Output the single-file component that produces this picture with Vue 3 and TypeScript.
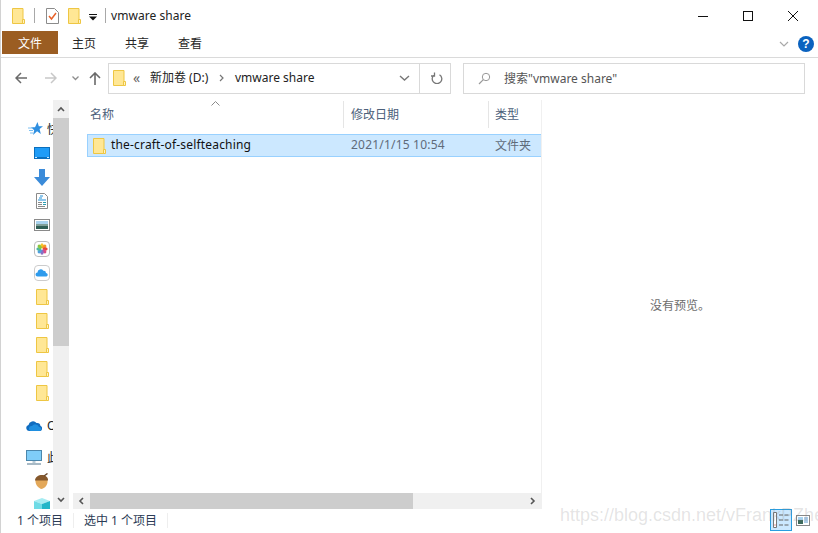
<script setup lang="ts">
const navRows: string[] = ['star', 'desk', 'down', 'doc', 'pic', 'photos', 'icloud', 'folder', 'folder', 'folder', 'folder', 'folder']
const tabs = ['主页', '共享', '查看']
const petals = [
  { r: 0, c: '#f6c528' },
  { r: 45, c: '#f59a23' },
  { r: 90, c: '#e8483c' },
  { r: 135, c: '#d94d8a' },
  { r: 180, c: '#8a6fc4' },
  { r: 225, c: '#4f9fdc' },
  { r: 270, c: '#4fb7a0' },
  { r: 315, c: '#8cc63f' },
]
</script>

<template>
  <div class="win">
    <svg class="defs" width="0" height="0" aria-hidden="true">
      <symbol id="fold" viewBox="0 0 13 16">
        <path d="M.5.5h10.500v15H.5z" fill="#ffe795" stroke="#eec643" />
        <path d="M10.500 11.500h2v4h-2z" fill="#fff3c4" stroke="#eec643" />
      </symbol>
    </svg>

    <header class="title">
      <svg class="ic12" width="13" height="16"><use href="#fold" /></svg>
      <i class="vsep s1"></i>
      <svg class="qdoc" width="13" height="16" viewBox="0 0 13 16">
        <path d="M.5.5h8l4 4v11H.5z" fill="#fff" stroke="#8b8b8b" />
        <path d="M3 8l2.500 3L10 5" fill="none" stroke="#e8622a" stroke-width="1.500" />
      </svg>
      <svg class="qfold" width="13" height="16"><use href="#fold" /></svg>
      <svg class="qdrop" width="8" height="7" viewBox="0 0 8 7">
        <path d="M0 0h8v1H0zM0 2.500h8L4 6.500z" fill="#111" />
      </svg>
      <i class="vsep s2"></i>
      <span class="wtitle">vmware share</span>
      <div class="caps">
        <svg width="12" height="12" viewBox="0 0 12 12"><path d="M1 6.500h10" stroke="#111" fill="none" /></svg>
        <svg width="12" height="12" viewBox="0 0 12 12"><rect x="1.500" y="1.500" width="9" height="9" fill="none" stroke="#111" /></svg>
        <svg width="12" height="12" viewBox="0 0 12 12"><path d="M1 1l10 10M11 1L1 11" stroke="#111" fill="none" /></svg>
      </div>
    </header>

    <nav class="ribbon">
      <span class="file">文件</span>
      <span v-for="t in tabs" :key="t" class="tab">{{ t }}</span>
      <svg class="rchev" width="10" height="6" viewBox="0 0 10 6"><path d="M1 1l4 4 4-4" fill="none" stroke="#a9a9a9" stroke-width="1.200" /></svg>
      <span class="help">?</span>
    </nav>

    <section class="addr">
      <svg class="a-back" width="12" height="12" viewBox="0 0 12 12"><path d="M6 1L1 6l5 5M1 6h11" fill="none" stroke="#6a6a6a" stroke-width="1.500" /></svg>
      <svg class="a-fwd" width="12" height="12" viewBox="0 0 12 12"><path d="M6 1l5 5-5 5M11 6H0" fill="none" stroke="#c8c8c8" stroke-width="1.500" /></svg>
      <svg class="a-drop" width="7" height="5" viewBox="0 0 7 5"><path d="M.5.500l3 3 3-3" fill="none" stroke="#8e8e8e" stroke-width="1.300" /></svg>
      <svg class="a-up" width="12" height="13" viewBox="0 0 12 13"><path d="M1 6l5-5 5 5M6 1v12" fill="none" stroke="#6a6a6a" stroke-width="1.600" /></svg>
      <div class="pathbox">
        <svg class="p-fold" width="13" height="16"><use href="#fold" /></svg>
        <span class="p-more">«</span>
        <span class="p-seg">新加卷 (D:)</span>
        <svg class="p-gt" width="5" height="8" viewBox="0 0 5 8"><path d="M1 1l3 3-3 3" fill="none" stroke="#777" stroke-width="1.200" /></svg>
        <span class="p-seg2">vmware share</span>
        <svg class="p-chev" width="11" height="6" viewBox="0 0 11 6"><path d="M1 1l4.500 4L10 1" fill="none" stroke="#777" stroke-width="1.400" /></svg>
        <i class="p-div"></i>
        <svg class="p-ref" width="12" height="12" viewBox="0 0 12 12"><path d="M3.500 2.200a4.800 4.800 0 1 0 5 0M3.500 0v3.500H0" fill="none" stroke="#777" stroke-width="1.300" transform="translate(0 .5)" /></svg>
      </div>
      <div class="searchbox">
        <svg width="13" height="13" viewBox="0 0 13 13"><circle cx="8" cy="5" r="3.700" fill="none" stroke="#999" /><path d="M5.300 7.700L1 12" stroke="#999" stroke-width="1.200" /></svg>
        <span>搜索"vmware share"</span>
      </div>
    </section>

    <main class="body">
      <aside class="nav">
        <div class="navlist">
          <div v-for="(r, i) in navRows" :key="i" class="navrow">
            <template v-if="r === 'star'">
              <svg class="n-wide" width="15" height="14" viewBox="0 0 15 14"><path d="M9.500 0l1.300 4.300H15l-3.400 2.800 1.200 5-3.700-2.900L5 13l1.200-4.800L3 5.300h4z" fill="#2f8fe0" /><path d="M0 6h5M1 8.500h4M2 11h3" stroke="#7cc0f2" /></svg>
              <span class="n-lab">快</span>
            </template>
            <svg v-else-if="r === 'desk'" class="n-ic" width="16" height="12" viewBox="0 0 16 12"><rect width="16" height="12" fill="#0b6fbd" /><rect x="1" y="1" width="14" height="9" fill="#1f9cf7" /><path d="M1 10h14v1H1z" fill="#0b6fbd" /><path d="M1 10.500h2M13 10.500h2" stroke="#cfeaff" /></svg>
            <svg v-else-if="r === 'down'" class="n-ic" width="16" height="17" viewBox="0 0 16 17"><path d="M5 0h6v8h5l-8 9-8-9h5z" fill="#3b8bd9" /></svg>
            <svg v-else-if="r === 'doc'" class="n-doc" width="12" height="16" viewBox="0 0 12 16"><path d="M.5.500h8l3 3v12H.5z" fill="#fff" stroke="#8a8a8a" /><path d="M4 3h3M3 5h3M2 7h8" stroke="#1f8fd8" /><path d="M2 9.500h4M2 11.500h4M2 13.500h7" stroke="#8a8a8a" /><path d="M7 9.500h3M7 11.500h3" stroke="#2a9db0" /></svg>
            <svg v-else-if="r === 'pic'" class="n-ic" width="16" height="12" viewBox="0 0 16 12"><rect x=".5" y=".5" width="15" height="11" fill="#fff" stroke="#8a8a8a" /><rect x="2" y="2" width="12" height="4" fill="#a9d3ef" /><rect x="2" y="5" width="12" height="2" fill="#7f9f99" /><rect x="2" y="7" width="12" height="3" fill="#2f5f56" /></svg>
            <svg v-else-if="r === 'photos'" class="n-ic" width="16" height="16" viewBox="0 0 16 16"><rect x=".5" y=".5" width="15" height="15" rx="3.500" fill="#fff" stroke="#bbb" /><ellipse v-for="p in petals" :key="p.r" cx="8" cy="4.800" rx="1.700" ry="2.500" :fill="p.c" :transform="`rotate(${p.r} 8 8)`" /></svg>
            <svg v-else-if="r === 'icloud'" class="n-ic" width="16" height="16" viewBox="0 0 16 16"><rect x=".5" y=".5" width="15" height="15" rx="3.500" fill="#fff" stroke="#ccc" /><path d="M3.500 11.500a2 2 0 0 1 0-4 3.200 3.200 0 0 1 5.800-1.800A2.400 2.400 0 0 1 12 8a1.800 1.800 0 0 1 .5 3.500z" fill="#2f9bec" /></svg>
            <svg v-else class="n-fold" width="13" height="16"><use href="#fold" /></svg>
          </div>
          <div class="navrow od">
            <svg class="n-cloud" width="16" height="11" viewBox="0 0 16 11"><path d="M3 11a3 3 0 0 1-.500-5.900A4.500 4.500 0 0 1 10.500 3 3.500 3.500 0 0 1 14.500 6 2.600 2.600 0 0 1 13.500 11z" fill="#0f6cc0" /><path d="M5 11a2.500 2.500 0 0 1 1-5 4 4 0 0 1 7 1 2 2 0 0 1 .500 4z" fill="#1f8fe0" /></svg>
            <span class="n-lab">O</span>
          </div>
          <div class="navrow pc">
            <svg class="n-cloud" width="16" height="15" viewBox="0 0 16 15"><rect x=".5" y=".5" width="15" height="10" fill="#7fcdf8" stroke="#4c87ac" /><path d="M6.500 11h3v2h-3z" fill="#b9cbd6" /><path d="M1 14h14" stroke="#8ba3b3" stroke-width="1.500" /></svg>
            <span class="n-lab">此</span>
          </div>
          <div class="navrow">
            <svg class="n-ic" width="16" height="16" viewBox="0 0 16 16"><path d="M1.500 7C1 12 5 15.500 7.500 16c4-1 6.500-4.500 6-9z" fill="#e3a85a" /><path d="M1 7.500C1 4 4.500 2 8 2s6.500 2.500 6 5.500z" fill="#85582c" /><path d="M10 3l3.500-2.500" stroke="#6b4a2c" stroke-width="1.500" /></svg>
          </div>
          <div class="navrow">
            <svg class="n-ic" width="16" height="14" viewBox="0 0 16 14"><path d="M0 3l8-3 8 3-8 3z" fill="#a6ecf2" /><path d="M0 3v8l8 3V6z" fill="#6fdbe6" /><path d="M16 3v8l-8 3V6z" fill="#22b6c8" /></svg>
          </div>
        </div>
        <div class="vbar">
          <svg class="up" width="8" height="6" viewBox="0 0 8 6"><path d="M1 5l3-3 3 3" fill="none" stroke="#555" stroke-width="1.600" /></svg>
          <div class="vthumb"></div>
          <svg class="dn" width="8" height="6" viewBox="0 0 8 6"><path d="M1 1l3 3 3-3" fill="none" stroke="#555" stroke-width="1.600" /></svg>
        </div>
      </aside>

      <section class="list">
        <div class="head">
          <svg class="sort" width="9" height="5" viewBox="0 0 9 5"><path d="M.5 4.500l4-4 4 4" fill="none" stroke="#8a8a8a" /></svg>
          <span class="h-name">名称</span>
          <span class="h-date">修改日期</span>
          <span class="h-type">类型</span>
        </div>
        <div class="row">
          <svg class="r-fold" width="13" height="16"><use href="#fold" /></svg>
          <span class="r-name">the-craft-of-selfteaching</span>
          <span class="r-date">2021/1/15 10:54</span>
          <span class="r-type">文件夹</span>
        </div>
        <div class="hbar">
          <svg width="6" height="8" viewBox="0 0 6 8"><path d="M5 1L2 4l3 3" fill="none" stroke="#555" stroke-width="1.600" /></svg>
          <div class="hthumb"></div>
          <svg class="hr" width="6" height="8" viewBox="0 0 6 8"><path d="M1 1l3 3-3 3" fill="none" stroke="#555" stroke-width="1.600" /></svg>
        </div>
      </section>

      <section class="preview">没有预览。</section>
    </main>

    <footer class="status">
      <span class="st1">1 个项目</span>
      <i class="st-sep"></i>
      <span>选中 1 个项目</span>
      <i class="st-sep"></i>
      <div class="views">
        <span class="v-on">
          <svg width="18" height="18" viewBox="0 0 18 18"><path d="M1.500 1.500h3v15h-3z" fill="#fff" stroke="#777" /><path d="M7 4h4M12.500 4h4M7 9h4M12.500 9h4M7 14h4M12.500 14h4" stroke="#666" /><path d="M2.500 13.500h1v1h-1z" fill="#c33" /></svg>
        </span>
        <svg class="v-off" width="14" height="11" viewBox="0 0 14 11"><rect x=".5" y=".5" width="13" height="10" fill="#fff" stroke="#888" /><rect x="2" y="5" width="5" height="4" fill="#3d6a5c" /><rect x="2" y="2" width="5" height="3" fill="#a9d3ef" /><path d="M8 3h4M8 5h4M8 7h4" stroke="#5a9bd0" /></svg>
      </div>
    </footer>

    <div class="mark">https://blog.csdn.net/vFrankPZhe</div>
  </div>
</template>

<style>
html, body { margin: 0; background: #fff; }
</style>

<style scoped>
.win {
  position: relative;
  width: 818px;
  height: 533px;
  overflow: hidden;
  box-sizing: border-box;
  display: flex;
  flex-direction: column;
  background: #fff;
  color: #222;
  font: 12px "Noto Sans", "Noto Sans CJK SC", sans-serif;
  border-left: 1px solid #d2d2d2;
}
.defs { position: absolute; }
svg { display: block; flex: none; }

.title { height: 31px; display: flex; align-items: center; box-sizing: border-box; }
.ic12 { margin-left: 11px; }
.vsep { width: 1px; height: 15px; background: #a8a8a8; }
.s1 { margin-left: 9px; }
.qdoc { margin-left: 11px; }
.qfold { margin-left: 9px; }
.qdrop { margin-left: 8px; margin-top: 3px; }
.s2 { margin-left: 8px; }
.wtitle { margin-left: 5px; letter-spacing: .05px; }
.caps { margin-left: auto; display: flex; gap: 33px; padding-right: 19px; }

.ribbon {
  height: 27px;
  display: flex;
  align-items: flex-start;
  border-bottom: 1px solid #dadada;
  box-sizing: border-box;
}
.file { margin-left: 1px; width: 56px; height: 23px; background: #9b5d22; color: #fff; text-align: center; line-height: 25px; }
.tab { line-height: 25px; color: #262626; }
.tab:nth-of-type(2) { margin-left: 14px; }
.tab:nth-of-type(3) { margin-left: 29px; }
.tab:nth-of-type(4) { margin-left: 29px; }
.rchev { margin-left: auto; margin-top: 10px; }
.help {
  margin: 5px 4px 0 9px;
  width: 16px;
  height: 16px;
  border-radius: 50%;
  background: #0a62bf;
  color: #fff;
  font: bold 12px/16px "Liberation Sans", sans-serif;
  text-align: center;
}

.addr { height: 40px; display: flex; align-items: center; box-sizing: border-box; }
.a-back { margin-left: 14px; }
.a-fwd { margin-left: 18px; }
.a-drop { margin-left: 15px; }
.a-up { margin-left: 10px; }
.pathbox, .searchbox {
  height: 31px;
  box-sizing: border-box;
  border: 1px solid #d9d9d9;
  display: flex;
  align-items: center;
}
.pathbox { margin-left: 7px; width: 343px; color: #222; }
.p-fold { margin-left: 4px; }
.p-more { margin-left: 7px; color: #666; width: 17px; font-size: 14px; margin-bottom: 2px; }
.p-seg { width: 67px; margin-bottom: 2px; }
.p-gt { margin-left: 2px; }
.p-seg2 { margin-left: 11px; width: 146px; white-space: nowrap; margin-bottom: 2px; }
.p-chev { margin-left: 18px; margin-right: 9px; }
.p-div { width: 1px; height: 29px; background: #d9d9d9; }
.p-ref { margin-left: 11px; }
.searchbox { margin-left: 12px; width: 342px; color: #555; }
.searchbox svg { margin-left: 14px; }
.searchbox span { margin-left: 13px; }

.body { height: 409px; margin-top: 2px; display: flex; }
.nav { width: 68px; display: flex; flex: none; }
.navlist { width: 52px; height: 409px; overflow: hidden; padding-top: 17px; box-sizing: border-box; }
.navrow { height: 24px; display: flex; align-items: center; position: relative; }
.n-ic { position: absolute; left: 33px; }
.n-doc { position: absolute; left: 35px; }
.n-wide { position: absolute; left: 27px; }
.n-cloud { position: absolute; left: 25px; }
.n-fold { position: absolute; left: 35px; }
.n-lab { position: absolute; left: 46px; color: #222; }
.od { margin-top: 8px; }
.pc { margin-top: 8px; }
.vbar {
  width: 16px;
  background: #f0f0f0;
  display: flex;
  flex-direction: column;
  align-items: center;
}
.vbar .up { margin-top: 6px; }
.vthumb { margin-top: 6px; align-self: stretch; height: 228px; background: #cdcdcd; }
.vbar .dn { margin-top: auto; margin-bottom: 6px; }

.list {
  margin-left: 4px;
  width: 469px;
  flex: none;
  border-right: 1px solid #f0f0f0;
  box-sizing: border-box;
  display: flex;
  flex-direction: column;
}
.head { height: 34px; position: relative; color: #4c607a; }
.sort { position: absolute; left: 138px; top: 1px; }
.h-name, .h-date, .h-type { position: absolute; top: 1px; line-height: 27px; }
.h-name { left: 17px; }
.h-date { left: 270px; padding-left: 7px; border-left: 1px solid #e5e5e5; }
.h-type { left: 415px; padding-left: 6px; border-left: 1px solid #e5e5e5; }
.row {
  margin-left: 14px;
  height: 23px;
  width: 454px;
  box-sizing: border-box;
  background: #cce8ff;
  border: 1px solid #99d1ff;
  border-width: 1px 0 1px 1px;
  display: flex;
  align-items: center;
}
.r-fold { margin-left: 5px; }
.r-name { margin-left: 5px; width: 240px; color: #111; letter-spacing: .17px; margin-bottom: 2px; }
.r-date { color: #5f6b7a; width: 144px; letter-spacing: .2px; margin-bottom: 2px; }
.r-type { color: #5f6b7a; margin-bottom: 2px; }
.hbar {
  margin-top: auto;
  height: 16px;
  background: #f0f0f0;
  display: flex;
  align-items: center;
  padding-left: 5px;
}
.hthumb { margin-left: 6px; width: 323px; height: 16px; background: #cdcdcd; }
.hr { margin-left: auto; margin-right: 5px; }
.preview { flex: 1; display: flex; align-items: center; justify-content: center; color: #6d6d6d; }

.status { flex: 1; display: flex; align-items: center; color: #2b3b55; padding-bottom: 2px; }
.st1 { margin-left: 16px; }
.st-sep { width: 1px; height: 15px; background: #eee; margin: 0 10px; }
.views { margin-left: auto; margin-right: 8px; display: flex; align-items: center; gap: 4px; }
.v-on { width: 22px; height: 22px; box-sizing: border-box; border: 1px solid #2a9ee0; background: #cce8ff; display: flex; align-items: center; justify-content: center; margin-left: -1px; }
.v-off { margin-right: 0; }

.mark {
  position: absolute;
  left: 559px;
  top: 505px;
  font: 18px "Liberation Sans", sans-serif;
  color: rgba(120, 120, 120, .2);
  white-space: nowrap;
  pointer-events: none;
}
</style>
